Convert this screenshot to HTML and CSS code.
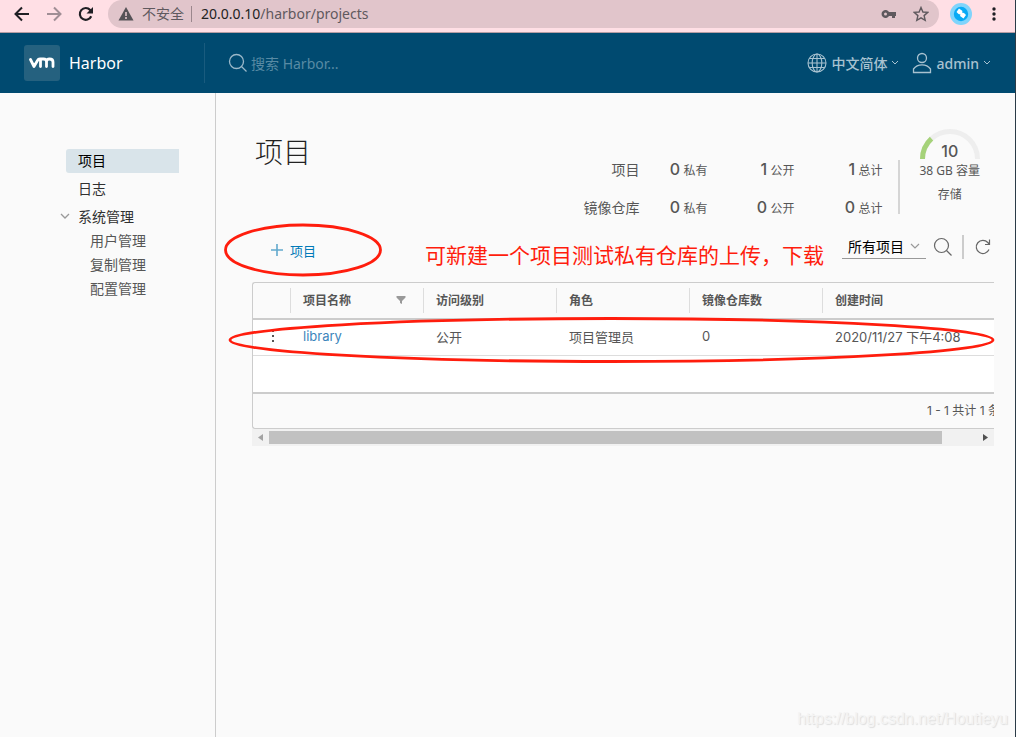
FILE: index.html
```html
<!DOCTYPE html>
<html lang="zh-CN">
<head>
<meta charset="utf-8">
<title>Harbor</title>
<link rel="stylesheet" href="styles.css">
</head>
<body>
<div class="window">
  <div class="browser-bar">
    <button class="nav-btn" aria-label="后退"><svg width="16" height="16" viewBox="0 0 16 16" fill="none" stroke="#1f1f24" stroke-width="2"><path d="M15 8H2M8 1.500L1.500 8L8 14.500"/></svg></button>
    <button class="nav-btn" aria-label="前进"><svg width="16" height="16" viewBox="0 0 16 16" fill="none" stroke="#a08e95" stroke-width="2"><path d="M1 8H14M8 1.500L14.500 8L8 14.500"/></svg></button>
    <button class="nav-btn" aria-label="重新加载"><svg width="16" height="16" viewBox="0 0 16 16"><path d="M13.200 10.200A5.900 5.900 0 1 1 12.200 4L13 5" fill="none" stroke="#1f1f24" stroke-width="2.200"/><path d="M15 1V7.500H8.500Z" fill="#1f1f24"/></svg></button>
    <div class="address">
      <svg width="16" height="16" viewBox="0 0 16 16"><path d="M8 1L15.500 14.500H.5Z" fill="#555257"/><path d="M8 6v4M8 11v2" stroke="#e1c5cb" stroke-width="1.600"/></svg>
      <span class="insecure">不安全</span>
      <span class="url"><b>20.0.0.10</b>/harbor/projects</span>
      <button class="nav-btn" aria-label="密码"><svg width="16" height="16" viewBox="0 0 16 16"><path d="M8 6A4 4 0 1 0 8 10H11V12H14V10H15V6ZM4.500 6.500A1.500 1.500 0 1 1 4.500 9.500A1.500 1.500 0 1 1 4.500 6.500Z" fill="#5f595e" fill-rule="evenodd"/></svg></button>
      <button class="nav-btn" aria-label="收藏"><svg width="16" height="16" viewBox="0 0 16 16"><path d="M8 1.500L9.900 6L14.800 6.400L11.100 9.600L12.200 14.300L8 11.800L3.800 14.300L4.900 9.600L1.200 6.400L6.100 6Z" fill="none" stroke="#5f595e" stroke-width="1.400"/></svg></button>
    </div>
    <button class="nav-btn ext" aria-label="扩展程序"><svg width="22" height="22" viewBox="0 0 22 22"><circle cx="11" cy="11" r="11" fill="#80d4fb"/><circle cx="11" cy="11" r="7.200" fill="#08aaf5"/><path d="M9 5.500L12.500 8L12 9.500L14 10L16 12L13.500 15.500L10 13L10.500 11.500L8.500 11L6.500 9Z" fill="#fff"/></svg></button>
    <button class="nav-btn" aria-label="菜单"><svg width="16" height="16" viewBox="0 0 16 16" fill="#1f1f24"><circle cx="8" cy="3" r="1.700"/><circle cx="8" cy="8" r="1.700"/><circle cx="8" cy="13" r="1.700"/></svg></button>
  </div>

  <header class="header">
    <a class="brand" href="#"><span class="logo"><svg width="26" height="14" viewBox="0 0 26 14" fill="none" stroke="#fff" stroke-width="2.800" stroke-linecap="round" stroke-linejoin="round" role="img" aria-label="vm"><path d="M1.500 3.500L5 10.500L8.500 4.500Q9.200 3 11 3H14.500Q17.500 3 17.500 5.500V10.500M11.500 3.500V10.500M17.500 5.500Q17.500 3 20.500 3Q24 3 24 6V10.500"/></svg></span>Harbor</a>
    <label class="search">
      <svg width="20" height="20" viewBox="0 0 20 20" fill="none" stroke="#9ab8c9" stroke-width="1.300"><circle cx="8.500" cy="8.500" r="7"/><path d="M13.500 13.500L18.500 18.500"/></svg>
      <input type="text" placeholder="搜索 Harbor..." aria-label="搜索 Harbor">
    </label>
    <button class="head-btn lang"><svg width="20" height="20" viewBox="0 0 20 20" fill="none" stroke="#a8c2d0" stroke-width="1.100"><circle cx="10" cy="10" r="9"/><ellipse cx="10" cy="10" rx="4.800" ry="9"/><path d="M10 1V19M1 10H19M2.500 5.500H17.500M2.500 14.500H17.500"/></svg>中文简体<svg width="8" height="6" viewBox="0 0 8 6" fill="none" stroke="#a8c2d0"><path d="M1 1L4 4L7 1"/></svg></button>
    <button class="head-btn"><svg width="20" height="22" viewBox="0 0 20 22" fill="none" stroke="#a8c2d0" stroke-width="1.300"><circle cx="10" cy="6" r="4.500"/><path d="M1.500 20.500V17Q4.500 12.800 10 12.800T18.500 17V20.500Z"/></svg>admin<svg width="8" height="6" viewBox="0 0 8 6" fill="none" stroke="#a8c2d0"><path d="M1 1L4 4L7 1"/></svg></button>
  </header>

  <div class="body">
    <nav class="sidebar">
      <a class="item active" href="#">项目</a>
      <a class="item" href="#">日志</a>
      <button class="item group"><svg width="10" height="6" viewBox="0 0 10 6" fill="none" stroke="#999" stroke-width="1.300"><path d="M1 1L5 5L9 1"/></svg>系统管理</button>
      <a class="item sub" href="#">用户管理</a>
      <a class="item sub" href="#">复制管理</a>
      <a class="item sub" href="#">配置管理</a>
    </nav>

    <main class="main">
      <div class="summary">
        <h1>项目</h1>
        <div class="stats">
          <span class="name">项目</span><span><b>0</b> 私有</span><span><b>1</b> 公开</span><span><b>1</b> 总计</span>
          <span class="name">镜像仓库</span><span><b>0</b> 私有</span><span><b>0</b> 公开</span><span><b>0</b> 总计</span>
        </div>
        <div class="gauge">
          <div class="dial">
            <svg width="60" height="30" viewBox="0 0 60 30" fill="none" stroke-width="5"><path d="M2.500 30A27.500 27.500 0 0 1 57.500 30" stroke="#eee"/><path d="M2.500 30A27.500 27.500 0 0 1 11.500 9.700" stroke="#a5d279"/></svg>
            <b>10</b>
          </div>
          <span>38 GB 容量</span>
          <span>存储</span>
        </div>
      </div>

      <div class="toolbar">
        <button class="new"><svg width="12" height="12" viewBox="0 0 12 12" stroke="#62a9cd" stroke-width="1.600"><path d="M6 0V12M0 6H12"/></svg>项目
          <svg class="ring" width="160" height="54" viewBox="0 0 160 54" fill="none" stroke="#ff1d0d" stroke-width="2.800"><ellipse cx="80" cy="27" rx="77.500" ry="25"/></svg>
        </button>
        <p class="note">可新建一个项目测试私有仓库的上传，下载</p>
        <div class="tools">
          <div class="filter">
            <select aria-label="项目筛选"><option>所有项目</option></select>
            <svg width="10" height="6" viewBox="0 0 10 6" fill="none" stroke="#999" stroke-width="1.200"><path d="M1 1L5 5L9 1"/></svg>
          </div>
          <button class="tool" aria-label="搜索"><svg width="20" height="20" viewBox="0 0 20 20" fill="none" stroke="#666" stroke-width="1.200"><circle cx="8.500" cy="8.500" r="7"/><path d="M13.500 13.500L18.500 18.500"/></svg></button>
          <button class="tool refresh" aria-label="刷新"><svg width="18" height="18" viewBox="0 0 18 18" fill="none" stroke="#666" stroke-width="1.200"><path d="M15 11.500A6.600 6.600 0 1 1 13.800 4.500L15.500 6.500M15.500 1.500V6.500H11"/></svg></button>
        </div>
      </div>

      <div class="grid">
        <div class="viewport">
          <table>
            <colgroup><col class="c-menu"><col class="c-data"><col class="c-data"><col class="c-data"><col class="c-data"><col></colgroup>
            <thead><tr>
              <td></td>
              <th><div class="head">项目名称<svg width="10" height="8" viewBox="0 0 10 8" fill="#999"><path d="M.5 0H9.500V1.500L6 5V8L4 7V5L.5 1.500Z"/></svg></div></th>
              <th><div class="head">访问级别</div></th><th><div class="head">角色</div></th><th><div class="head">镜像仓库数</div></th><th><div class="head">创建时间</div></th>
            </tr></thead>
            <tbody>
              <tr><td class="menu"><button aria-label="操作"><svg width="4" height="14" viewBox="0 0 4 14" fill="#555"><path d="M1 1h2v2H1zM1 6h2v2H1zM1 11h2v2H1z"/></svg></button></td><td><a href="#">library</a></td><td>公开</td><td>项目管理员</td><td>0</td><td>2020/11/27 下午4:08</td></tr>
              <tr><td colspan="6"></td></tr>
            </tbody>
            <tfoot><tr><td colspan="6">1 - 1 共计 1 条</td></tr></tfoot>
          </table>
        </div>
        <div class="scrollbar"><svg width="5" height="7" viewBox="0 0 5 7" fill="#a3a3a3"><path d="M5 0V7L0 3.500Z"/></svg><div class="track"><div class="thumb"></div></div><svg width="5" height="7" viewBox="0 0 5 7" fill="#505050"><path d="M0 0V7L5 3.500Z"/></svg></div>
        <svg class="ring row-ring" viewBox="0 0 768 46" preserveAspectRatio="none" fill="none" stroke="#ff1d0d" stroke-width="2.800"><ellipse cx="384" cy="23" rx="382" ry="21.500"/></svg>
      </div>
      <div class="watermark">https://blog.csdn.net/Houtieyu</div>
    </main>
  </div>
</div>
</body>
</html>
```
FILE: styles.css
```css
* { box-sizing: border-box; }
body {
  margin: 0;
  color: #565656;
  font-family: Inter, "Noto Sans CJK SC", sans-serif;
  font-size: 13px;
}
button, input, select { font: inherit; color: inherit; border: 0; padding: 0; background: none; }
a { color: inherit; text-decoration: none; }
svg { flex: none; display: block; }

.window {
  display: flex;
  flex-direction: column;
  min-height: 100vh;
  background: #fafafa;
  border-right: 1px solid #2b3b47;
}

/* Browser bar */
.browser-bar {
  display: flex;
  align-items: center;
  height: 33px;
  padding: 0 13px 4px 14px;
  gap: 16px;
  background: #ffdfe5;
  border-bottom: 1px solid #b59da4;
  font-family: "Noto Sans", "Noto Sans CJK SC", sans-serif;
  font-size: 14px;
}
.address {
  flex: 1;
  display: flex;
  align-items: center;
  height: 28px;
  margin: 0 -5px 0 -2px;
  padding: 0 10px;
  border-radius: 14px;
  background: #e1c5cb;
}
.address .nav-btn { margin-left: 16px; }
.insecure { margin-left: 8px; padding-right: 7px; line-height: 16px; border-right: 1px solid #9b878d; color: #5f595e; }
.url { flex: 1; margin-left: 9px; padding-bottom: 2px; color: #5f595e; }
.url b { font-weight: 400; color: #222; }
.ext { margin-right: -2px; }

/* Application header */
.header {
  display: flex;
  align-items: center;
  height: 60px;
  padding: 0 24px;
  background: #004a70;
  font-family: "Noto Sans", "Noto Sans CJK SC", sans-serif;
}
.brand { display: flex; align-items: center; gap: 9px; width: 180px; color: #fff; font-size: 16px; }
.logo { display: flex; align-items: center; justify-content: center; width: 36px; height: 36px; border-radius: 3px; background: #25617f; }
.search { flex: 1; display: flex; align-items: center; gap: 3px; height: 40px; padding-left: 23px; border-left: 1px solid #195b7e; }
.search input { flex: 1; min-width: 0; font-size: 14px; outline: 0; }
.search input::placeholder { color: #588aa4; opacity: 1; }
.head-btn { display: flex; align-items: center; gap: 4px; color: #a8c2d0; font-size: 14px; font-weight: 500; }
.lang { margin-right: 13px; }

.body { flex: 1; display: flex; }

/* Side navigation */
.sidebar { width: 216px; padding: 56px 36px 0 66px; border-right: 1px solid #ccc; font-size: 14px; }
.item { display: flex; align-items: center; width: 100%; height: 24px; padding: 0 0 2px 12px; color: #313131; }
.active { margin-bottom: 4px; border-radius: 3px 0 0 3px; background: #d9e4ea; color: #000; }
.group { margin: 4px 0 0 -6px; padding-left: 0; gap: 8px; }
.sub { padding-left: 24px; color: #565656; }

.main { flex: 1; min-width: 0; display: flex; flex-direction: column; padding: 36px 21px 8px 36px; }

/* Totals */
.summary { display: flex; height: 98px; }
h1 { flex: 1; margin: 4px 0 0 3px; color: #222; font-size: 28px; line-height: 40px; font-weight: 300; }
.stats {
  display: grid;
  grid-template-columns: 57px 68px 87px 88px;
  grid-auto-rows: 38px;
  margin-top: 21px;
  padding-right: 16px;
  line-height: 38px;
  text-align: right;
  font-size: 12px;
}
.stats b { font-size: 16px; font-weight: 500; }
.stats .name { font-size: 14px; padding-top: 1px; }
.gauge {
  position: relative;
  display: flex;
  flex-direction: column;
  align-items: center;
  padding: 0 14px 0 21px;
  font-family: "Noto Sans", "Noto Sans CJK SC", sans-serif;
  font-size: 12px;
  line-height: 24px;
}
.gauge::before { content: ""; position: absolute; left: 0; top: 31px; width: 2px; height: 54px; background: #d5d5d5; }
.gauge span { white-space: nowrap; }
.dial { position: relative; height: 30px; font-family: Inter, sans-serif; }
.dial b { position: absolute; left: 0; right: 0; bottom: -4px; text-align: center; font-size: 16px; font-weight: 500; }

/* Toolbar */
.toolbar { display: flex; align-items: center; height: 46px; margin-bottom: 9px; }
.new { position: relative; display: flex; align-items: center; gap: 7px; margin-left: 19px; color: #0079b8; }
.ring { position: absolute; pointer-events: none; }
.new .ring { left: -48px; top: -18px; }
.note { flex: 1; margin: 12px 0 0 109px; color: #ff1d0d; font-size: 21px; line-height: 28px; white-space: nowrap; }
.tools { display: flex; align-items: center; padding: 0 2px 6px 0; }
.filter { position: relative; width: 84px; height: 24px; border-bottom: 1px solid #999; color: #000; font-size: 14px; }
.filter select { display: block; width: 100%; height: 22px; padding-left: 6px; appearance: none; }
.filter svg { position: absolute; right: 6px; top: 8px; }
.tool { margin-left: 7px; }
.refresh { height: 24px; margin-left: 9px; padding-left: 10px; border-left: 2px solid #ccc; }

/* Data grid */
.grid { position: relative; }
.viewport { overflow: hidden; border: 1px solid #ccc; border-right: 0; border-radius: 3px 0 0 3px; }
table { width: 783px; table-layout: fixed; border-collapse: separate; border-spacing: 0; }
.c-menu { width: 37px; }
.c-data { width: 133px; }
td, th { padding: 0 13px 3px; text-align: left; font-weight: 400; }
thead th, thead td { height: 37px; padding: 0; border-bottom: 2px solid #ccc; }
.head { display: flex; align-items: center; justify-content: space-between; height: 25px; padding: 0 17px 2px 12px; border-left: 1px solid #ddd; font-size: 12px; font-weight: 700; }
tbody td { height: 36px; background: #fff; }
tbody tr:first-child td { border-bottom: 1px solid #ddd; }
tbody tr:last-child td { height: 38px; border-bottom: 2px solid #ccc; }
tbody a { color: #3c85bb; }
tbody .menu { padding: 0 0 0 18px; }
tfoot td { height: 34px; padding: 0 36px 4px 0; text-align: right; font-size: 12px; }
.scrollbar { display: flex; align-items: center; height: 17px; padding: 0 6px; gap: 6px; background: #f1f1f1; }
.track { flex: 1; }
.thumb { width: 95%; height: 13px; background: #c1c1c1; }
.row-ring { left: -24px; top: 35px; width: calc(100% + 25px); height: 46px; }

.watermark {
  margin: auto -14px 0 0;
  text-align: right;
  color: #f4f4f4;
  font: 16px/20px "Liberation Sans", sans-serif;
  text-shadow: 1px 1px 1px #ddd;
}
```
